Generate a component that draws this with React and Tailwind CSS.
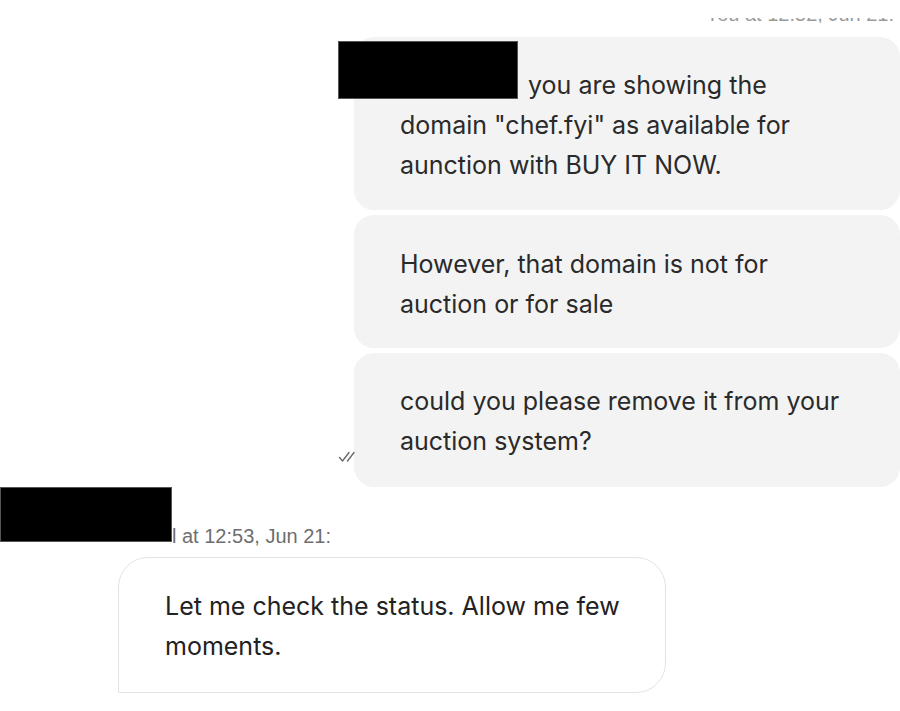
function DoubleCheck() {
  return (
    <svg width="22" height="12" viewBox="0 0 22 12" fill="none" stroke="#6b6b6b" strokeWidth="1.4" strokeLinecap="round" strokeLinejoin="round">
      <path d="M1.5 6.5 L4.5 10 L11 1.5" />
      <path d="M9.5 10 L16 1.5" />
    </svg>
  );
}

function Bubble({ children, className = "" }) {
  return (
    <div
      className={`relative rounded-[20px] bg-[#f3f3f3] pl-[46px] pr-[50px] text-[25px] leading-[40px] text-[#2a2a2a] ${className}`}
    >
      {children}
    </div>
  );
}

export default function App() {
  return (
    <div
      className="h-[711px] w-[900px] overflow-hidden bg-white"
      style={{ fontFamily: "Inter, 'Noto Sans', sans-serif" }}
    >
      {/* partly scrolled-off timestamp */}
      <div className="relative h-[23px] overflow-hidden">
        <div
          className="absolute bottom-[-1px] right-[6px] whitespace-nowrap text-[20px] leading-none text-[#9a9a9a]"
          style={{ fontFamily: "'Liberation Sans', Arial, sans-serif" }}
        >
          You at 12:52, Jun 21:
        </div>
        <div className="absolute inset-x-0 top-0 h-[18px] bg-white" />
      </div>

      <div className="ml-[354px] mt-[14px] flex flex-col gap-[5px]">
        <Bubble className="pt-[28px] pb-[25px]">
          <div className="absolute left-[-16px] top-[4px] h-[58px] w-[180px] border border-[#555] bg-black" />
          <span className="inline-block w-[121px]" /> you are showing the domain "chef.fyi" as available for aunction with BUY IT NOW.
        </Bubble>
        <Bubble className="pt-[29px] pb-[24px]">
          However, that domain is not for auction or for sale
        </Bubble>
        <Bubble className="pt-[28px] pb-[26px]">
          <div className="absolute left-[-16px] bottom-[24px]">
            <DoubleCheck />
          </div>
          could you please remove it from your auction system?
        </Bubble>
      </div>

      <div className="flex items-end">
        <div className="h-[55px] w-[172px] border border-[#555] bg-black" />
        <span
          className="mb-[-6px] text-[20px] leading-[24px] text-[#6e6e6e]"
          style={{ fontFamily: "'Liberation Sans', Arial, sans-serif" }}
        >
          l at 12:53, Jun 21:
        </span>
      </div>

      <div className="ml-[118px] mt-[15px] w-[548px] rounded-[30px] rounded-bl-none border-[1.5px] border-[#dfe4ea] bg-white pl-[46px] pr-[38px] pt-[28px] pb-[26px] text-[25px] leading-[40px] text-[#222]">
        Let me check the status. Allow me few moments.
      </div>
    </div>
  );
}
